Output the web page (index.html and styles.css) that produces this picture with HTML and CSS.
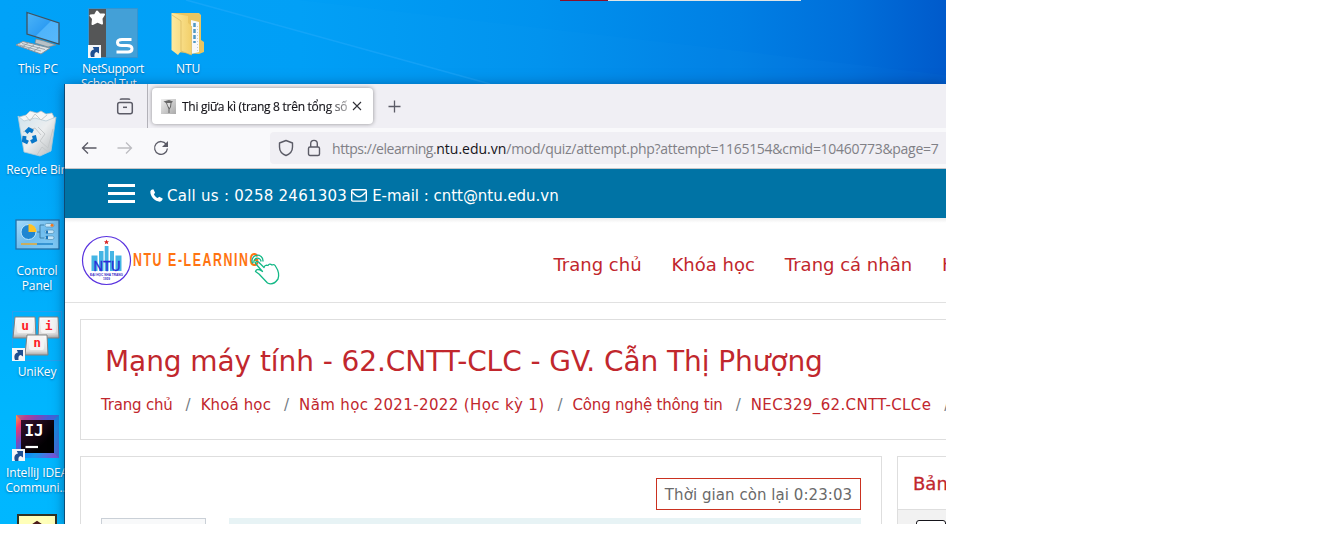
FILE: index.html
```html
<!DOCTYPE html>
<html lang="vi">
<head>
<meta charset="utf-8">
<title>NTU E-Learning</title>
<link rel="stylesheet" href="styles.css">
</head>
<body>
<svg width="0" height="0" class="defs">
  <defs>
    <linearGradient id="screen" x1="0" y1="0" x2="1" y2="1"><stop offset="0" stop-color="#4db5f8"/><stop offset=".5" stop-color="#2e9df3"/><stop offset=".52" stop-color="#4fb4fb"/><stop offset="1" stop-color="#58b9fc"/></linearGradient>
    <linearGradient id="fold" x1="0" y1="0" x2="1" y2="0"><stop offset="0" stop-color="#fdeaa0"/><stop offset="1" stop-color="#f2cf6a"/></linearGradient>
    <linearGradient id="bin" x1="0" y1="0" x2="1" y2="1"><stop offset="0" stop-color="#cfe3ee"/><stop offset=".5" stop-color="#eceeef"/><stop offset="1" stop-color="#b4b9bc"/></linearGradient>
    <linearGradient id="cp" x1="0" y1="0" x2="1" y2="1"><stop offset="0" stop-color="#a5dafa"/><stop offset=".5" stop-color="#70bdee"/><stop offset="1" stop-color="#83cef9"/></linearGradient>
    <linearGradient id="key" x1="0" y1="0" x2="0" y2="1"><stop offset="0" stop-color="#fff"/><stop offset=".8" stop-color="#dedede"/><stop offset="1" stop-color="#a6a6a6"/></linearGradient>
    <linearGradient id="ij" x1="0" y1="0" x2="1" y2=".8"><stop offset="0" stop-color="#fca244"/><stop offset=".16" stop-color="#ef3c6c"/><stop offset=".32" stop-color="#8b46b3"/><stop offset=".5" stop-color="#087cfa"/><stop offset=".72" stop-color="#1797ec"/><stop offset="1" stop-color="#7656d8"/></linearGradient>
    <linearGradient id="ijin" x1="0" y1="0" x2="1" y2="1"><stop offset="0" stop-color="#35102e"/><stop offset=".7" stop-color="#020002"/></linearGradient>
    <linearGradient id="fav" x1="0" y1="0" x2="1" y2="1"><stop offset="0" stop-color="#eee"/><stop offset="1" stop-color="#aaa"/></linearGradient>
    <symbol id="shortcut" viewBox="0 0 13 13"><rect width="13" height="13" fill="#f4f6f8"/><path d="M3 12C1.500 8 3 5 6 4.600L4.800 2H11V8.500L8.800 7C6 7.500 6.500 10 6.500 12Z" fill="#1f4f91"/></symbol>
  </defs>
</svg>
<div class="desktop">
  <svg class="rays" width="946" height="90" viewBox="0 0 946 90"><path d="M186 0L490 84L946 90V75L300 0Z" fill="#4cb7ff" opacity=".03"/><path d="M186 0L490 84" stroke="#3fb4ff" stroke-width="1.500" opacity=".3"/></svg>
  <div class="topstrip"><i></i></div>

  <div class="item pc">
    <svg width="48" height="48" viewBox="0 0 48 48"><path d="M13 3.500L45 14V35L13 25Z" fill="url(#screen)" stroke="#40525f" stroke-width="1.300"/><path d="M22 30L30 32L42 36L34 38L21 34Z" fill="#b9c1c6" stroke="#7c878d" stroke-width=".7"/><path d="M2 36L9 32.500L36 39L27 45Z" fill="#dfe4e7" stroke="#87929a" stroke-width="1"/><path d="M5 36L27 42M8 34.500L31 40.500M8 38L14 34M14 40L20 36M20 42L26 38" stroke="#8d989f" stroke-width=".8"/></svg>
    <span>This PC</span>
  </div>
  <div class="item netsupport">
    <svg width="50" height="50" viewBox="0 0 50 50"><rect x=".5" y=".5" width="49" height="49" fill="#43a0d7" stroke="#3295d3"/><rect x="1" y="1" width="17" height="48" fill="#555657"/><path d="M9 3.500L11.500 6.500L16 6.500L13.500 10.500L14 15.500L9.500 13.500L4.500 16L5 10.500L2.500 7.500L7 7Z" fill="#fff" stroke="#fff" stroke-width="2" stroke-linejoin="round"/><path d="M43.500 31.500H34C30.500 31.500 29.500 32.500 29.500 34.500S30.500 37.500 34 37.500H39C43 37.500 44 38.700 44 40.800S42.500 44 40 44H28.500" fill="none" stroke="#fff" stroke-width="3"/><use href="#shortcut" x="0" y="37" width="13" height="13"/></svg>
    <span>NetSupport<br>School Tut...</span>
  </div>
  <div class="item ntu">
    <svg width="48" height="48" viewBox="0 0 48 48"><path d="M8 4H35L37 6V31L40 33V43L35 45L12 43Z" fill="#eac560"/><path d="M27 11L35 13V43L27 45Z" fill="#f7f8f8"/><path d="M30.500 14V34" stroke="#5298c2" stroke-width="2.500" stroke-dasharray="4 2"/><path d="M33.500 17V43" stroke="#c3ccd2" stroke-width="1" stroke-dasharray="1 2"/><path d="M7.500 4L24 7V14L27.500 17V46L17 42L14 46L7.500 41Z" fill="url(#fold)"/><path d="M17 42V12L8 6M27.500 17V46L17 42" fill="none" stroke="#d9b85f" stroke-width=".7"/></svg>
    <span>NTU</span>
  </div>
  <div class="item recycle">
    <svg width="48" height="48" viewBox="0 0 48 48"><path d="M6 7L13 5L17 1L24 3L28 1L33 4L39 3L41 7L38 14H9Z" fill="#f5f6f6" stroke="#b4bdc1" stroke-width=".7"/><path d="M5 6L11 42L27 46L38 41L43 7L33 11L22 8L11 11Z" fill="url(#bin)" stroke="#b7cbd5" stroke-width=".8"/><path d="M13 6L17 11L22 4L28 10L34 5M25 17L32 24L27 31L35 38L40 19M24 45L29 37L35 42M10 22L22 18L28 25" fill="none" stroke="#c5c9cb" stroke-width="1"/><g fill="none" stroke="#0877c9" stroke-width="4"><path d="M13 22.500L16 19.500L20 21.500"/><path d="M21 25.500L22 30L18 32"/><path d="M15 32.500L11 30.500L11.500 26"/></g></svg>
    <span>Recycle Bin</span>
  </div>
  <div class="item control">
    <svg width="48" height="48" viewBox="0 0 48 48"><rect x="3" y="10" width="43" height="29" fill="url(#cp)" stroke="#2370a8" stroke-width="1.300"/><circle cx="15.500" cy="22" r="7.500" fill="#2086d1" stroke="#bce6ff"/><path d="M15.500 22V14A8 8 0 0 1 23.500 22Z" fill="#ffc225"/><path d="M24 22H27V15H31M27 22V28H31" fill="none" stroke="#31719a" stroke-width=".8"/><g fill="#c5e7fa" stroke="#5693b7" stroke-width=".7"><rect x="32" y="13.500" width="9" height="3.500" rx="1.700"/><rect x="32" y="20" width="9" height="3.500" rx="1.700"/><rect x="32" y="26" width="9" height="3.500" rx="1.700"/></g><circle cx="39" cy="15.300" r="1.500" fill="#f37920"/><path d="M34 20.500V23.500M34 26V29" stroke="#1876bf" stroke-width="2"/><path d="M8 34H24" stroke="#f7a614" stroke-width="1.300"/><path d="M24 34H40" stroke="#147bc1" stroke-width="1.300"/></svg>
    <span>Control<br>Panel</span>
  </div>
  <div class="item unikey">
    <svg width="50" height="50" viewBox="0 0 50 50"><rect x=".5" y=".5" width="49" height="49" fill="none" stroke="#28a0ee"/><g fill="url(#key)" stroke="#818181"><path d="M3 6H23L24 27H1Z"/><path d="M27 6H46L47 27H26Z"/><path d="M15 24H35L36 44H13Z"/></g><g fill="#f5f5f5"><rect x="5" y="8" width="16" height="14" rx="2"/><rect x="29" y="8" width="15" height="14" rx="2"/><rect x="17" y="25" width="15" height="14" rx="2"/></g><g class="keys"><text x="13" y="19">u</text><text x="36.500" y="19">i</text><text x="25" y="36">n</text></g><use href="#shortcut" x="0" y="37" width="13" height="13"/></svg>
    <span>UniKey</span>
  </div>
  <div class="item intellij">
    <svg width="50" height="50" viewBox="0 0 50 50"><rect x="4" y="4" width="43" height="43" fill="url(#ij)"/><path d="M4 4L9 9H42L47 4Z" fill="#7944b7" opacity=".5"/><path d="M42 9L47 4V47L42 42Z" fill="#217cd5" opacity=".55"/><rect x="9" y="9" width="33" height="33" fill="url(#ijin)"/><text class="ij" x="12.500" y="25">IJ</text><path d="M13.500 36H26" stroke="#fff" stroke-width="2.200"/><use href="#shortcut" x="0" y="38" width="13" height="13"/></svg>
    <span>IntelliJ IDEA<br>Communi...</span>
  </div>
  <div class="item last">
    <svg width="40" height="12" viewBox="0 0 40 12"><rect x="1" y="1" width="38" height="20" fill="#ffffb9" stroke="#303325" stroke-width="2"/><path d="M14 12L20 8L26 12" fill="none" stroke="#4b1b1b" stroke-width="2"/></svg>
  </div>

  <div class="window">
    <div class="tabbar">
      <div class="firefox-view"><svg width="18" height="18" viewBox="0 0 18 18" fill="none" stroke="#5b5b66" stroke-width="1.500"><path d="M4 1.700Q4.500 .9 6 .9H12Q13.500 .9 14 1.700" /><rect x="1.700" y="4.500" width="14.600" height="11.300" rx="2"/><path d="M7 9.300H11"/></svg></div>
      <div class="tab">
        <svg width="15" height="15" viewBox="0 0 15 15"><rect width="15" height="15" fill="url(#fav)"/><path d="M2.500 2.500L8 1L12 2.500L10.500 4L10 8L8.500 10.500V14H7.500V10L5 4Z" fill="#666"/><path d="M6 4L9.500 4L8.800 9L7 7Z" fill="#ddd"/></svg>
        <span class="tab-title">Thi giữa kì (trang 8 trên tổng số</span>
        <svg class="close" width="10" height="10" viewBox="0 0 10 10" stroke="#303037" stroke-width="1.100"><path d="M1 1L9 9M9 1L1 9"/></svg>
      </div>
      <svg class="newtab" width="13" height="13" viewBox="0 0 13 13" stroke="#5b5b66" stroke-width="1.300"><path d="M6.500 .5V12.500M.5 6.500H12.500"/></svg>
    </div>
    <div class="toolbar">
      <svg width="16" height="16" viewBox="0 0 16 16" fill="none" stroke="#5b5b66" stroke-width="1.300"><path d="M15.500 8H1.500M7 2.500L1.500 8L7 13.500"/></svg>
      <svg width="16" height="16" viewBox="0 0 16 16" fill="none" stroke="#bdbdc1" stroke-width="1.300"><path d="M.5 8H14.500M9 2.500L14.500 8L9 13.500"/></svg>
      <svg width="16" height="16" viewBox="0 0 16 16" fill="none" stroke="#5b5b66" stroke-width="1.300"><path d="M13.300 4.300A6.400 6.400 0 1 0 14.400 8.500"/><path d="M15 1V7H9Z" fill="#5b5b66" stroke="none"/></svg>
      <div class="urlbar">
        <svg width="16" height="18" viewBox="0 0 16 18" fill="none" stroke="#5b5b66" stroke-width="1.400"><path d="M8 1.500L14.500 4V8C14.500 12 12 15 8 16.500C4 15 1.500 12 1.500 8V4Z" stroke-linejoin="round"/></svg>
        <svg width="14" height="18" viewBox="0 0 14 18" fill="none" stroke="#5b5b66" stroke-width="1.400"><rect x="1.500" y="8" width="11" height="8.500" rx="1.500"/><path d="M3.700 8V4.700A3.300 3.300 0 0 1 10.300 4.700V8"/></svg>
        <div class="url"><span class="scheme">https://elearning.</span><b>ntu.edu.vn</b><span class="path">/mod/quiz/attempt.php?attempt=1165154&amp;cmid=10460773&amp;page=7</span></div>
      </div>
    </div>
    <div class="contact">
      <div class="burger"><i></i><i></i><i></i></div>
      <svg width="13" height="13" viewBox="0 0 13 13"><path d="M.3 2.500C.8 1 2.500 .2 3.500 .4L5.100 3.800L3.900 5.200C4.700 6.900 6 8.200 7.700 9.100L9.200 7.800L12.700 9.600C12.700 11.100 11.500 12.700 9.800 12.700C5 12.300 .3 7.800 .3 2.500Z" fill="#fff"/></svg>
      <span class="call">Call us : 0258 2461303</span>
      <svg width="16" height="13" viewBox="0 0 16 13" fill="none" stroke="#fff" stroke-width="1.400"><rect x=".7" y=".7" width="14.600" height="11.400" rx="1"/><path d="M1 3C3 5 6 7.800 8 7.800S13 5 15 3"/></svg>
      <span class="mail">E-mail : cntt@ntu.edu.vn</span>
    </div>
    <div class="header">
      <svg class="logo" width="202" height="54" viewBox="0 0 202 54">
        <circle cx="25.500" cy="26.500" r="24" fill="#fff" stroke="#5932df" stroke-width="1.200"/>
        <path d="M10.500 37V21.500H16.500V37M18 37V17H22.500V37M23.700 37V12H27.500V37M29 37V17H33V37M34.500 37V21.500H40.500V37" fill="#45b5e4"/>
        <path d="M25.500 5.500L26.200 7.300H28L26.700 8.400L27.200 10.200L25.500 9.200L23.800 10.200L24.300 8.400L23 7.300H24.800Z" fill="#d92323"/>
        <text class="logo-mark" x="12.500" y="36.500" textLength="27" lengthAdjust="spacingAndGlyphs">NTU</text>
        <text class="logo-small" x="9" y="41.500" textLength="33" lengthAdjust="spacingAndGlyphs">ĐẠI HỌC NHA TRANG</text>
        <text class="logo-small" x="22" y="46" textLength="7" lengthAdjust="spacingAndGlyphs">1959</text>
        <text class="logo-name" x="0" y="0" textLength="194" transform="translate(52 31.500) scale(.65 1)">NTU E-LEARNING</text>
        <g fill="none" stroke="#13b886" stroke-width="1.300" stroke-linejoin="round" stroke-linecap="round"><path d="M178 40L174.500 37.500Q175.500 34.500 179 36L181.500 37.500L174.500 29.500Q174.500 26.500 177.500 28L183 33.500Q184 30.500 187 31.500Q188.500 29 191 31Q193.500 29.500 195 33Q199 39 197 45Q192 52 186.500 49Z"/><path d="M173 28.500A3.500 3.500 0 1 1 180 27M171.500 29A5.500 5.500 0 1 1 182 27"/></g>
      </svg>
      <nav><a>Trang chủ</a><a>Khóa học</a><a>Trang cá nhân</a><a>H</a></nav>
    </div>
    <main>
      <section class="card course">
        <h1>Mạng máy tính - 62.CNTT-CLC - GV. Cẫn Thị Phượng</h1>
        <div class="crumbs"><a class="tight">Trang chủ</a><a class="soft">Khoá học</a><a class="wide">Năm học 2021-2022 (Học kỳ 1)</a><a class="tight">Công nghệ thông tin</a><a class="wide">NEC329_62.CNTT-CLCe</a><a></a></div>
      </section>
      <div class="columns">
        <section class="card quiz">
          <div class="timer"><span>Thời gian còn lại 0:23:03</span></div>
          <div class="question"><div class="info"></div><div class="formulation"></div></div>
        </section>
        <aside class="card side">
          <h2>Bảng</h2>
          <div class="side-body"><i></i></div>
        </aside>
      </div>
    </main>
  </div>
</div>
</body>
</html>
```

FILE: styles.css
```css
* { box-sizing: border-box; }
body { margin: 0; background: #fff; }
svg { display: block; flex: none; }
.defs { position: absolute; }
.desktop {
  position: relative; width: 946px; height: 524px; overflow: hidden;
  background:
    linear-gradient(to bottom, rgba(0,174,255,0) 84px, rgba(0,184,255,.95) 430px),
    linear-gradient(to right, #00a2f8 0, #009ff6 300px, #0092ee 540px, #007fe4 740px, #006fda 850px, #005acb 946px);
}
.rays { position: absolute; left: 0; top: 0; }
.topstrip { position: absolute; left: 560px; top: 0; width: 241px; height: 1px; background: #dfe5e6; }
.topstrip i { display: block; width: 48px; height: 1px; background: #8a0f2b; }

.item {
  position: absolute; width: 76px; display: flex; flex-direction: column; align-items: center;
  font: 12px/15px "Open Sans", "Noto Sans", sans-serif; color: #fff; text-align: center; white-space: nowrap;
  text-shadow: 0 1px 2px rgba(0,40,90,.5); letter-spacing: -.1px;
}
.item span { margin-top: 3px; }
.pc { left: 0; top: 9px; }
.pc span { margin-top: 4px; }
.netsupport { left: 75px; top: 8px; letter-spacing: -.3px; }
.ntu { left: 150px; top: 9px; }
.ntu span { margin-top: 4px; }
.recycle { left: -1px; top: 110px; }
.recycle span { margin-top: 4px; }
.control { left: -1px; top: 210px; }
.control span { margin-top: 5px; }
.unikey { left: -1px; top: 311px; }
.unikey span { margin-top: 3px; }
.intellij { left: -1px; top: 411px; }
.intellij span { margin-top: 4px; }
.last { left: -1px; top: 514px; }
.keys text { font: bold 13px "DejaVu Sans Mono", monospace; fill: #ff1e28; text-anchor: middle; text-shadow: none; }
.ij { font: bold 16px "DejaVu Sans Mono", monospace; fill: #fff; text-shadow: none; }

.window {
  position: absolute; left: 65px; top: 84px; width: 881px; height: 440px; overflow: hidden;
  background: #fff; box-shadow: -1px 0 0 rgba(20,50,80,.7), 0 2px 12px rgba(0,20,60,.5);
  font-family: "DejaVu Sans", sans-serif; white-space: nowrap;
}
.tabbar { height: 44px; background: #f0eff4; display: flex; align-items: center; }
.firefox-view { width: 83px; height: 44px; border-right: 1px solid #b3b2b9; padding: 14px 0 0 51px; }
.tab {
  width: 221px; height: 36px; margin-left: 4px; padding: 0 11px 0 9px; border-radius: 4px;
  background: #fff; box-shadow: 0 0 4px rgba(0,0,0,.4); display: flex; align-items: center;
}
.tab-title {
  width: 166px; margin-left: 6px; padding-top: 1px; font: 12px/20px "Open Sans", "Noto Sans", sans-serif; color: #15141a;
  letter-spacing: -.27px; -webkit-text-stroke: .15px;
  -webkit-mask-image: linear-gradient(to right, #000 145px, transparent 178px); mask-image: linear-gradient(to right, #000 145px, transparent 178px);
}
.close { margin-left: 4px; }
.newtab { margin-left: 15px; }
.toolbar { height: 41px; background: #f9f9fb; border-bottom: 1px solid #c5c5c7; display: flex; align-items: center; padding-left: 16px; gap: 20px; }
.urlbar { flex: 1; height: 32px; margin-left: 81px; background: #f0eff4; border-radius: 4px 0 0 4px; display: flex; align-items: center; padding-left: 8px; }
.urlbar svg + svg { margin-left: 13px; }
.url { margin-left: 11px; padding-top: 2px; font: 14px/20px "Open Sans", "Noto Sans", sans-serif; color: #808086; }
.url b { font-weight: 400; color: #15141a; }
.scheme { letter-spacing: -.46px; }
.path { letter-spacing: -.28px; }

.contact { height: 49px; background: #0073a5; color: #fff; font-size: 15px; display: flex; align-items: center; padding: 4px 0 0 43px; }
.burger { width: 27px; display: flex; flex-direction: column; gap: 5px; margin: -5px 15px 0 0; }
.burger i { height: 3px; background: #fff; }
.call { margin: 0 4px 0 4px; letter-spacing: .26px; }
.mail { margin-left: 5px; letter-spacing: -.03px; }
.header { height: 85px; border-bottom: 1px solid #e1e1e1; display: flex; background: linear-gradient(#ededed, #fff 5px); }
.logo { margin: 16px 0 0 16px; }
.logo-mark { font: 15px "Liberation Sans", sans-serif; fill: #2b29d7; stroke: #2b29d7; stroke-width: .3; }
.logo-small { font: bold 4px "Liberation Sans", sans-serif; fill: #3928c6; }
.logo-name { font: bold 19px "Liberation Sans", sans-serif; fill: #ff7411; }
nav { margin: 34px 0 0 270.500px; display: flex; gap: 30px; font-size: 18px; line-height: 26px; color: #c1272d; }
main { padding: 16px 15px; color: #c1272d; }
.card { border: 1px solid #dedede; background: #fff; }
.course { width: 900px; height: 121px; padding: 22px 20px; }
h1 { margin: 0 0 13px 4px; font-size: 28px; line-height: 40px; font-weight: 400; letter-spacing: -.08px; }
.crumbs { font-size: 15px; line-height: 20px; display: flex; }
.crumbs a + a::before { content: "/"; color: #737b82; padding: 0 9px 0 13px; letter-spacing: 1px; }
.tight { letter-spacing: -.2px; }
.soft { letter-spacing: .12px; }
.wide { letter-spacing: .37px; }
.columns { display: flex; gap: 15px; margin-top: 16px; }
.quiz { width: 802px; height: 140px; padding: 21px 20px; flex: none; }
.timer { display: flex; justify-content: flex-end; }
.timer span { width: 205px; height: 32px; border: 1px solid #ca3120; color: #6a6a6a; font-size: 15px; line-height: 32px; letter-spacing: .06px; text-align: center; }
.question { display: flex; gap: 23px; margin-top: 8px; }
.info { width: 105px; height: 60px; border: 1px solid #cad0d7; background: #f8f9fa; }
.formulation { flex: 1; height: 60px; background: #e7f3f5; }
.side { width: 300px; height: 140px; flex: none; }
.side h2 { margin: 0; height: 53px; padding-left: 15px; border-bottom: 1px solid #dedede; font-size: 18px; line-height: 54px; font-weight: 400; -webkit-text-stroke: .3px; }
.side-body { height: 86px; background: #f2f2f2; padding: 10px 18px; }
.side-body i { display: block; width: 30px; height: 40px; border: 1px solid #15141a; border-radius: 3px; background: #fff; }
```
